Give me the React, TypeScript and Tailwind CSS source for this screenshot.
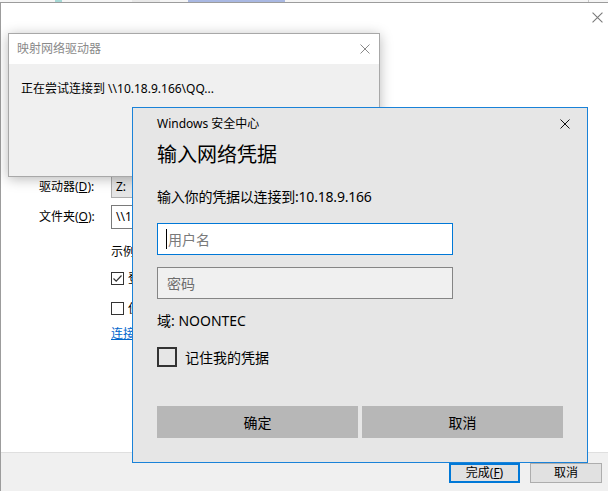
import React from "react";

const font = "font-['Noto_Sans','Noto_Sans_CJK_SC',sans-serif]";

const CloseX = ({ size = 10, color = "#000" }: { size?: number; color?: string }) => (
  <svg width={size} height={size} viewBox="0 0 10 10" className="shrink-0">
    <path d="M0.5 0.5 L9.5 9.5 M9.5 0.5 L0.5 9.5" stroke={color} strokeWidth="1" fill="none" />
  </svg>
);

const SmallCheck = ({ checked }: { checked?: boolean }) => (
  <div className="flex h-[13px] w-[13px] shrink-0 items-center justify-center border border-[#333] bg-white">
    {checked && (
      <svg width="11" height="11" viewBox="0 0 11 11">
        <path d="M1.5 5.5 L4.2 8.2 L9.5 2.5" stroke="#333" strokeWidth="1.2" fill="none" />
      </svg>
    )}
  </div>
);

// the wizard window behind everything (its form runs under the security dialog, so it is cut at that edge)
const MapDriveWizard = () => (
  <div className="flex h-full flex-col">
    <div className="relative h-[2px] bg-[#f5f5f5]">
      <span className="absolute left-[55px] top-0 h-[2px] w-[7px] bg-[#a5d8d5]" />
      <span className="absolute left-[132px] top-0 h-[2px] w-[28px] bg-[#e8e8e8]" />
      <span className="absolute left-[188px] top-0 h-[2px] w-[97px] bg-[#a9b8e2]" />
      <span className="absolute left-[588px] top-0 h-[2px] w-px bg-[#c8c8c8]" />
    </div>
    <div className="flex flex-1 flex-col border-l border-t border-[#9c9c9c] bg-white">
      <div className="flex h-[28px] items-center justify-end pr-[5px]">
        <CloseX size={11} color="#7a7a7a" />
      </div>
      <div className="w-[132px] flex-1 overflow-hidden whitespace-nowrap pl-[38px] text-[12px] text-black">
        <div className="mt-[144px] flex h-[23px] items-center">
          <span className="w-[72px] shrink-0">
            驱动器(<span className="underline">D</span>):
          </span>
          <div className="flex h-[23px] w-[120px] shrink-0 items-center border border-[#adadad] bg-[#e5e5e5] pl-[4px]">Z:</div>
        </div>
        <div className="mt-[7px] flex h-[24px] items-center">
          <span className="w-[72px] shrink-0">
            文件夹(<span className="underline">O</span>):
          </span>
          <div className="flex h-[24px] w-[300px] shrink-0 items-center border border-[#7a7a7a] bg-white pl-[4px]">\\1</div>
        </div>
        <div className="ml-[72px] mt-[15px] leading-[16px]">示例</div>
        <div className="ml-[72px] mt-[12px] flex h-[13px] items-center gap-[4px]">
          <SmallCheck checked />
          <span>登</span>
        </div>
        <div className="ml-[72px] mt-[17px] flex h-[13px] items-center gap-[4px]">
          <SmallCheck />
          <span>使</span>
        </div>
        <div className="ml-[72px] mt-[11px] leading-[16px] text-[#0066cc] underline">连接</div>
      </div>
      <div className="flex h-[39px] justify-end gap-[10px] border-t border-[#dfdfdf] bg-[#f0f0f0] pr-[6px] pt-[10px] text-[12px]">
        <div className="flex h-[20px] w-[71px] items-center justify-center border-2 border-[#0078d7] bg-[#e1e1e1]">
          完成(<span className="underline">F</span>)
        </div>
        <div className="flex h-[20px] w-[72px] items-center justify-center border border-[#adadad] bg-[#e1e1e1]">取消</div>
      </div>
    </div>
  </div>
);

const ConnectingDialog = () => (
  <div className="absolute left-[8px] top-[33px] flex h-[144px] w-[372px] flex-col border border-[#a8a8a8] shadow-[0_2px_12px_rgba(0,0,0,0.28)]">
    <div className="flex h-[30px] items-center justify-between bg-white pl-[8px] pr-[9px] text-[12px] text-[#8a8a8a]">
      <span>映射网络驱动器</span>
      <CloseX size={10} color="#8a8a8a" />
    </div>
    <div className="flex-1 bg-[#f0f0f0] pl-[12px] pt-[17px] text-[12px] leading-[16px] text-black">
      正在尝试连接到 \\10.18.9.166\QQ...
    </div>
  </div>
);

const SecurityDialog = () => (
  <div className="absolute left-[132px] top-[107px] flex h-[356px] w-[456px] flex-col border border-[#1a82d8] bg-[#e6e6e6] text-black">
    <div className="flex items-center justify-between pl-[24px] pr-[17px] pt-[8px] text-[12px] leading-[16px]">
      <span>Windows 安全中心</span>
      <CloseX size={10} color="#111" />
    </div>
    <div className="flex flex-col px-[24px]">
      <div className="mt-[9px] text-[20px] leading-[28px]">输入网络凭据</div>
      <div className="mt-[18px] text-[14px] leading-[20px] tracking-[-0.2px]">输入你的凭据以连接到:10.18.9.166</div>
      <div className="mt-[16px] flex h-[32px] w-[296px] items-center border border-[#0078d7] bg-white pl-[8px] text-[14px] text-[#7a7a7a]">
        <span className="mr-px h-[20px] w-px bg-black" />
        用户名
      </div>
      <div className="mt-[12px] flex h-[32px] w-[296px] items-center border border-[#858585] bg-[#f0f0f0] pl-[9px] text-[14px] text-[#6d6d6d]">
        密码
      </div>
      <div className="mt-[12px] text-[14px] leading-[20px]">域: NOONTEC</div>
      <div className="mt-[16px] flex h-[20px] items-center gap-[8px] text-[14px]">
        <div className="h-[20px] w-[20px] border-2 border-[#333]" />
        <span>记住我的凭据</span>
      </div>
      <div className="mt-[39px] flex gap-[4px] text-[14px]">
        <div className="flex h-[32px] w-[201px] items-center justify-center bg-[#b7b7b7]">确定</div>
        <div className="flex h-[32px] w-[201px] items-center justify-center bg-[#b7b7b7]">取消</div>
      </div>
    </div>
  </div>
);

export default function App() {
  return (
    <div className={`relative h-[491px] w-[608px] overflow-hidden bg-white ${font}`}>
      <MapDriveWizard />
      <ConnectingDialog />
      <SecurityDialog />
    </div>
  );
}
